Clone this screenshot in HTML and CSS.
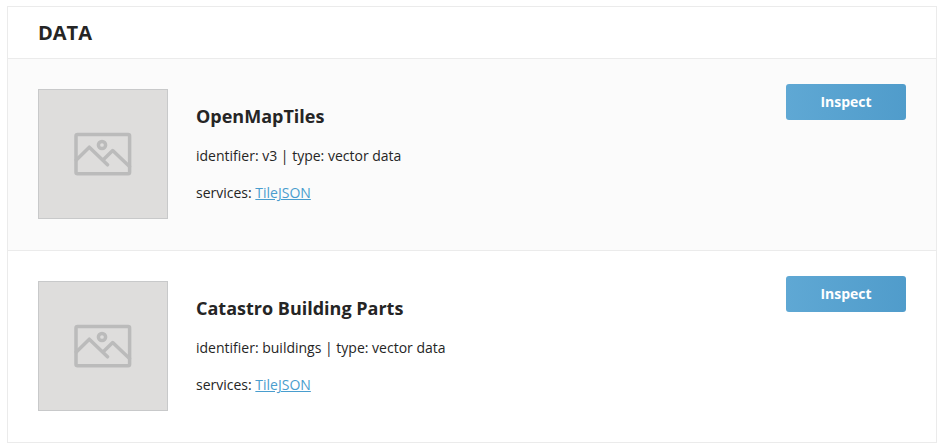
FILE: index.html
```html
<!DOCTYPE html>
<html lang="en">
<head>
<meta charset="utf-8">
<title>Data</title>
<link rel="stylesheet" href="styles.css">
</head>
<body>
<section class="box">
  <h2 class="box-header">DATA</h2>
  <article class="item">
    <div class="thumb"><svg class="picture" viewBox="0 0 58 44"><rect x="2" y="2.4" width="53.6" height="39.4" rx="1.5"/><circle cx="28" cy="13" r="3.6"/><path d="M2.3 28 L15.3 15.2 L33.5 32.8 M29 28 L38.7 18.5 L55.5 34.5"/></svg></div>
    <div class="details">
      <h3>OpenMapTiles</h3>
      <p>identifier: v3 | type: vector data</p>
      <p>services: <a href="#">TileJSON</a></p>
    </div>
    <a class="btn" href="#">Inspect</a>
  </article>
  <article class="item">
    <div class="thumb"><svg class="picture" viewBox="0 0 58 44"><rect x="2" y="2.4" width="53.6" height="39.4" rx="1.5"/><circle cx="28" cy="13" r="3.6"/><path d="M2.3 28 L15.3 15.2 L33.5 32.8 M29 28 L38.7 18.5 L55.5 34.5"/></svg></div>
    <div class="details">
      <h3>Catastro Building Parts</h3>
      <p>identifier: buildings | type: vector data</p>
      <p>services: <a href="#">TileJSON</a></p>
    </div>
    <a class="btn" href="#">Inspect</a>
  </article>
</section>
</body>
</html>
```
FILE: styles.css
```css
* { box-sizing: border-box; }
body { margin: 0; background: #fff; color: #252525; font-family: "Open Sans", sans-serif; font-size: 14px; }
.box { width: 930px; margin: 6px 0 0 7px; border: 1px solid #ebebeb; }
.box-header { margin: 0; height: 51px; padding-left: 30px; font-size: 20px; line-height: 52px; font-weight: 700; }
.item { display: flex; align-items: flex-start; height: 192px; padding: 30px; border-top: 1px solid #ebebeb; }
.item:nth-child(even) { background: #fbfbfb; }
.thumb { display: flex; align-items: center; justify-content: center; width: 130px; height: 130px; border: 1px solid #c8c9ca; background: #dedddc; }
.picture { width: 58px; height: 44px; fill: none; stroke: #bbb; stroke-width: 3.5; stroke-linejoin: round; stroke-linecap: round; }
.details { flex: 1; padding: 14px 0 0 28px; }
h3 { margin: 0 0 15px; font-size: 18px; line-height: 26px; font-weight: 700; }
p { margin: 0 0 13px; line-height: 24px; }
.details a { color: #499dce; }
.btn { width: 120px; height: 36px; margin-top: -5px; border-radius: 3px; background: linear-gradient(90deg, #5fa8d4, #509ccb); color: #fff; font-weight: 700; line-height: 36px; text-align: center; text-decoration: none; }
```
